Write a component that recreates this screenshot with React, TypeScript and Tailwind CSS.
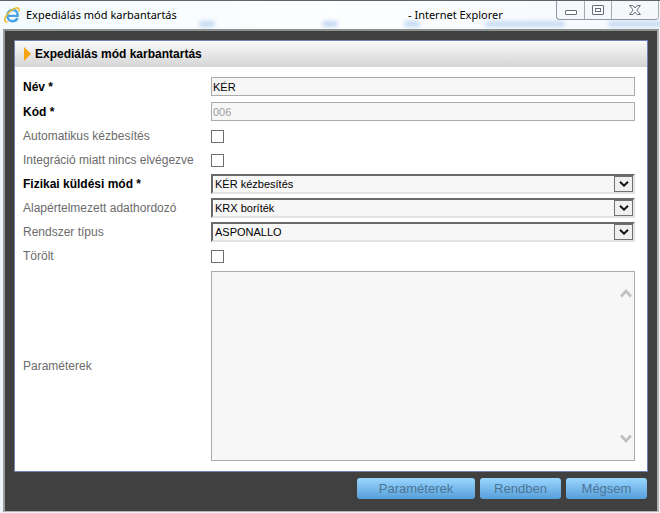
import React from "react";

function BrowserLogo() {
  return (
    <svg viewBox="0 0 16 16" className="h-4 w-4 shrink-0" aria-hidden="true">
      <path
        d="M4 8.9H13.6C13.9 5.3 11.9 3 8.8 3C5.6 3 3.3 5.3 3.3 8.6C3.3 12 5.6 14.2 8.7 14.2C11.1 14.2 12.7 13.1 13.4 11"
        fill="none"
        stroke="#4aa3e0"
        strokeWidth="2.4"
      />
      <path d="M4.6 6.3C5.4 3.6 10.6 2.6 12.3 6" fill="none" stroke="#8bd3f5" strokeWidth="1" />
      <path
        d="M14.7 4.6C15.6 2 14.5.5 12 1C8 1.8 3 6.4 1.3 10.6C.2 13.6 1 15.6 3.6 14.9"
        fill="none"
        stroke="#edbd2c"
        strokeWidth="1.6"
      />
    </svg>
  );
}

function TitleBar() {
  const caption = "flex h-full items-center justify-center border-r border-[#a3abb5]";
  return (
    <header className="relative flex h-[29px] items-center overflow-hidden border-t border-[#5f6266] bg-gradient-to-r from-[#f3fbfe] via-[#fdfeff] to-[#f5f9fd] pl-1 font-['Noto_Sans',sans-serif] text-[11px] text-black">
      <div className="absolute left-[199px] top-[20px] h-1.5 w-4 rounded-full bg-[#c3d8f2] blur-[2px]" />
      <div className="absolute left-[322px] top-[20px] h-1.5 w-4 rounded-full bg-[#c3d8f2] blur-[2px]" />
      <div className="absolute left-[404px] top-[20px] h-1.5 w-4 rounded-full bg-[#c3d8f2] blur-[2px]" />
      <div className="absolute left-[485px] top-[20px] h-1.5 w-20 rounded-full bg-[#c9dbf3] blur-[2px]" />
      <div className="absolute left-[608px] top-[20px] h-1.5 w-14 rounded-full bg-[#c9dbf3] blur-[2px]" />
      <BrowserLogo />
      <span className="relative w-[384px] shrink-0 pl-1.5">Expediálás mód karbantartás</span>
      <span className="relative grow whitespace-nowrap pl-1">- Internet Explorer</span>
      <div className="relative mr-px flex h-[19px] w-[103px] shrink-0 self-start overflow-hidden rounded-b border-b border-l border-[#8f98a3] bg-[#f4f8fb]">
        <button type="button" aria-label="Kis méret" className={`${caption} w-7`}>
          <svg viewBox="0 0 12 5" className="mt-1 h-[5px] w-3">
            <rect x=".5" y=".5" width="11" height="4" rx=".5" fill="#fff" stroke="#656b77" />
          </svg>
        </button>
        <button type="button" aria-label="Teljes méret" className={`${caption} w-[27px]`}>
          <svg viewBox="0 0 12 10" className="h-2.5 w-3">
            <rect x=".5" y=".5" width="11" height="9" rx=".5" fill="#fff" stroke="#656b77" />
            <rect x="3.5" y="3.5" width="5" height="3" fill="#fff" stroke="#656b77" />
          </svg>
        </button>
        <button type="button" aria-label="Bezárás" className={`${caption} grow`}>
          <svg viewBox="0 0 12 10" className="h-2.5 w-3">
            <path
              d="M.6.5H3.8L6 3L8.2.5H11.4L7.8 5L11.4 9.5H8.2L6 7L3.8 9.5H.6L4.2 5Z"
              fill="#fff"
              stroke="#656b77"
              strokeLinejoin="round"
            />
          </svg>
        </button>
      </div>
    </header>
  );
}

function Row({
  id,
  label,
  required,
  tall,
  children,
}: {
  id: string;
  label: string;
  required?: boolean;
  tall?: boolean;
  children: React.ReactNode;
}) {
  return (
    <div className={`flex items-center ${tall ? "h-[25px]" : "h-6"}`}>
      <label
        htmlFor={id}
        className={`w-[188px] shrink-0 whitespace-nowrap ${required ? "font-bold text-black" : "text-[#6b6b6b]"}`}
      >
        {label}
        {required && " *"}
      </label>
      {children}
    </div>
  );
}

function Check({ id }: { id: string }) {
  return (
    <input
      id={id}
      type="checkbox"
      className="h-[13px] w-[13px] appearance-none border border-[#707070] bg-white checked:bg-[#707070]"
    />
  );
}

function Select({ id, value }: { id: string; value: string }) {
  return (
    <div className="relative grow">
      <select
        id={id}
        className="block h-5 w-full appearance-none border-2 border-b-[#e3e3e3] border-l-[#696969] border-r-[#e3e3e3] border-t-[#696969] bg-[#f7f7f7] pl-0.5 text-[11px] leading-4 text-black"
      >
        <option>{value}</option>
      </select>
      <span className="pointer-events-none absolute right-0.5 top-0.5 flex h-4 w-[19px] items-center justify-center border border-[#707070] bg-[#f0f0f0]">
        <svg viewBox="0 0 10 6" className="h-1.5 w-2.5">
          <path d="M1 .8L5 4.6L9 .8" fill="none" stroke="#111" strokeWidth="2" />
        </svg>
      </span>
    </div>
  );
}

function ActionButton({ children, wide }: { children: string; wide?: boolean }) {
  return (
    <button
      type="button"
      className={`h-[21px] rounded-[3px] bg-gradient-to-b from-[#9ad6ff] to-[#559fda] text-[13px] leading-5 text-[#4b7596] ${wide ? "w-[118px]" : "w-[81px]"}`}
    >
      {children}
    </button>
  );
}

export default function App() {
  const field = "h-[19px] min-w-0 grow border border-[#ababab] bg-[#f7f7f7] px-px text-[11px]";
  return (
    <div className="min-h-screen bg-[#eff4fa] font-['Liberation_Sans',Arial,sans-serif] text-xs">
      <TitleBar />
      <div className="ml-[3px] mr-px border-2 border-b border-[#b4b4b4] border-l-[#9b9b9b] border-t-[#8c928f] bg-[#404040] px-[9px] pb-3 pt-[9px]">
        <main className="border border-[#6d82b5] bg-white">
          <h1 className="flex h-[26px] items-center bg-gradient-to-b from-[#fafafa] to-[#d5d5d5] pl-[9px] text-xs font-bold text-black">
            <svg viewBox="0 0 7 14" className="mr-1 h-3.5 w-[7px]" aria-hidden="true">
              <path d="M0 0L7 7L0 14Z" fill="#f5a30f" />
            </svg>
            Expediálás mód karbantartás
          </h1>
          <form className="pb-2.5 pl-2 pr-3 pt-[7px]">
            <Row id="nev" label="Név" required tall>
              <input id="nev" defaultValue="KÉR" className={`${field} text-black`} />
            </Row>
            <Row id="kod" label="Kód" required tall>
              <input id="kod" defaultValue="006" disabled className={`${field} text-[#a0a0a0]`} />
            </Row>
            <Row id="auto" label="Automatikus kézbesítés">
              <Check id="auto" />
            </Row>
            <Row id="integracio" label="Integráció miatt nincs elvégezve">
              <Check id="integracio" />
            </Row>
            <Row id="mod" label="Fizikai küldési mód" required>
              <Select id="mod" value="KÉR kézbesítés" />
            </Row>
            <Row id="adathordozo" label="Alapértelmezett adathordozó">
              <Select id="adathordozo" value="KRX boríték" />
            </Row>
            <Row id="tipus" label="Rendszer típus">
              <Select id="tipus" value="ASPONALLO" />
            </Row>
            <Row id="torolt" label="Törölt">
              <Check id="torolt" />
            </Row>
            <div className="mt-[3px] flex items-center">
              <label htmlFor="parameterek" className="w-[188px] shrink-0 text-[#6b6b6b]">
                Paraméterek
              </label>
              <div className="relative grow">
                <textarea
                  id="parameterek"
                  className="block h-[190px] w-full resize-none border border-[#ababab] bg-[#f7f7f7] p-1 text-[11px]"
                />
                <div className="pointer-events-none absolute inset-y-0 right-[3px] flex flex-col justify-between py-[18px]">
                  <svg viewBox="0 0 12 9" className="h-[9px] w-3">
                    <path d="M1 7.5L6 2L11 7.5" fill="none" stroke="#c1c1c1" strokeWidth="2.8" />
                  </svg>
                  <svg viewBox="0 0 12 9" className="h-[9px] w-3">
                    <path d="M1 1.5L6 7L11 1.5" fill="none" stroke="#c1c1c1" strokeWidth="2.8" />
                  </svg>
                </div>
              </div>
            </div>
          </form>
        </main>
        <div className="mr-px mt-1.5 flex justify-end gap-[5px]">
          <ActionButton wide>Paraméterek</ActionButton>
          <ActionButton>Rendben</ActionButton>
          <ActionButton>Mégsem</ActionButton>
        </div>
      </div>
    </div>
  );
}
